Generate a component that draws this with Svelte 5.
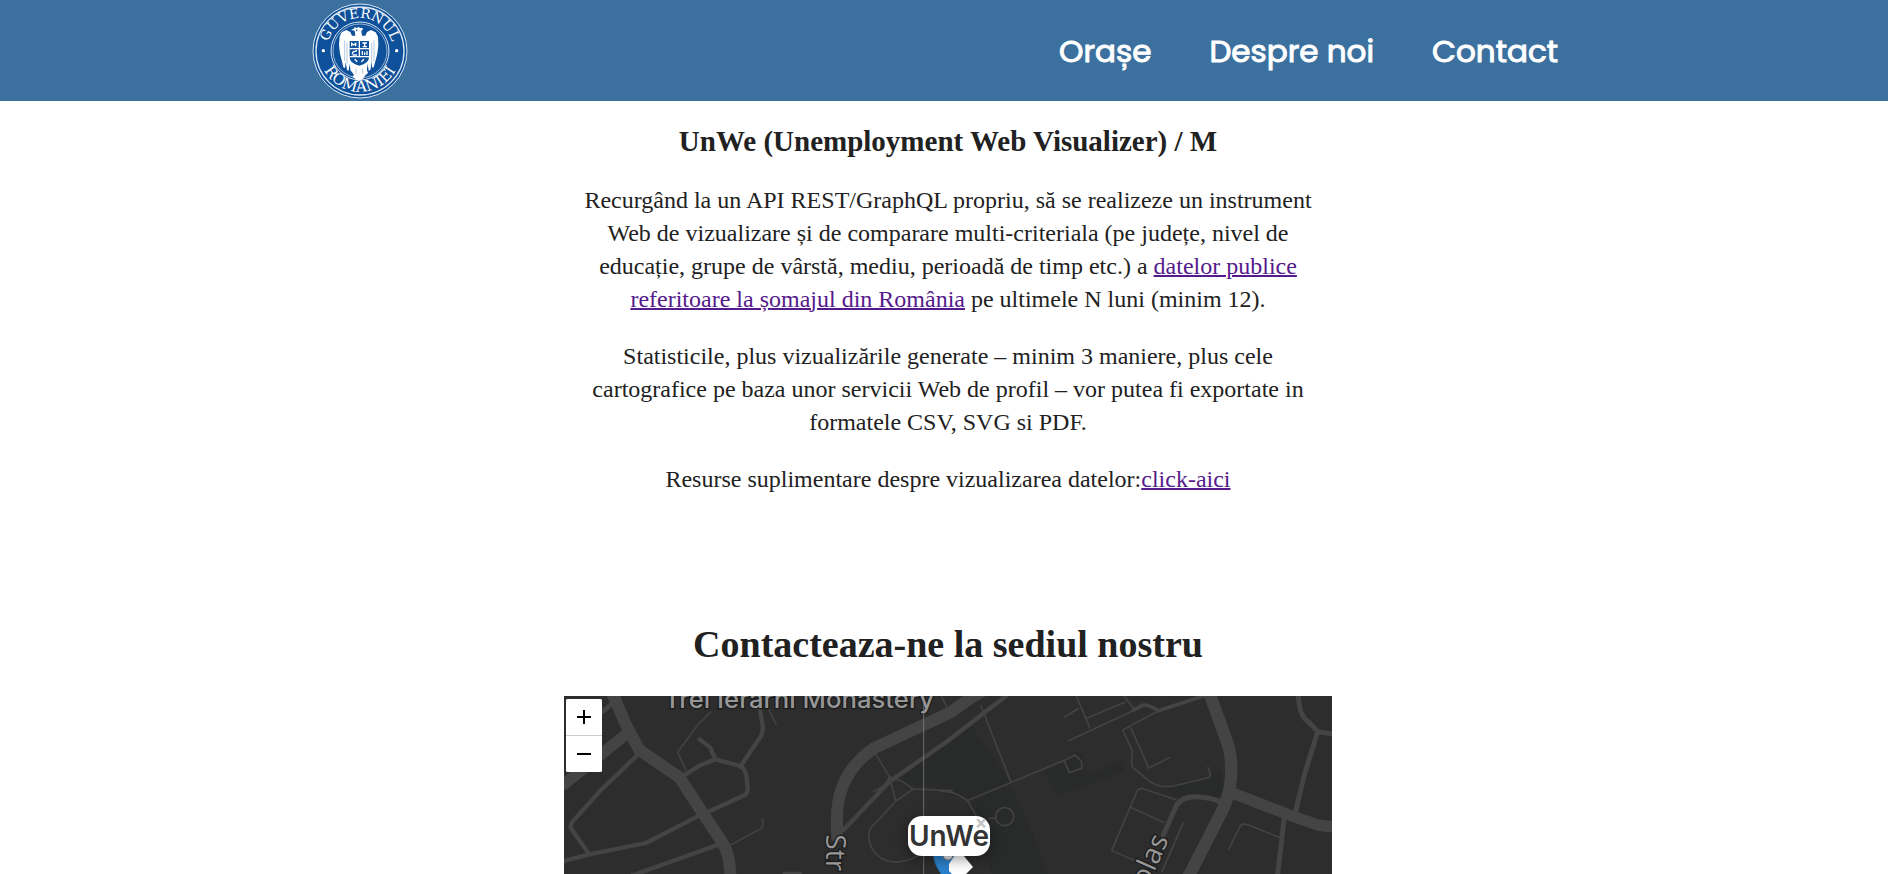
<script>
  const nav = ['Orașe', 'Despre noi', 'Contact'];
</script>

<div class="page">
  <header>
    <div class="bar">
      <a class="logo" href="#acasa" aria-label="Guvernul României">
        <svg viewBox="0 0 288 288" width="96" height="96">
          <defs>
            <path id="arc-top" d="M45 144A99 99 0 0 1 243 144" />
            <path id="arc-bottom" d="M22 144A122 122 0 0 0 266 144" />
          </defs>
          <circle cx="144" cy="144" r="141" fill="#0e509a" stroke="#dce8f3" stroke-width="3" />
          <circle cx="144" cy="144" r="132" fill="none" stroke="#dce8f3" stroke-width="4" />
          <circle cx="144" cy="144" r="87" fill="none" stroke="#dce8f3" stroke-width="3" />
          <circle cx="144" cy="144" r="81" fill="none" stroke="#dce8f3" stroke-width="2" />
          <circle cx="34" cy="143" r="5" fill="#fff" />
          <circle cx="254" cy="143" r="5" fill="#fff" />
          <text class="seal"><textPath href="#arc-top" startOffset="50%" text-anchor="middle">GUVERNUL</textPath></text>
          <text class="seal lower"><textPath href="#arc-bottom" startOffset="50%" text-anchor="middle">ROMÂNIEI</textPath></text>
          <g fill="#fff">
            <path d="M129 72l6 4 4-5 5 4 6-1 3 5-5 5 2 14h10l5-11 12-6 14 7 7 13 1 25-3 26-5 20-6 21-4 2-2-18-4 24-5 2-3-21-3 22-6 4-5 9 5 4-10 9-8 4-8-4-11-10 6-4-5-8-6-4-3-22-3 21-5-2-4-24-2 18-5-2-5-21-5-20-3-26 2-25 6-13 14-7 12 6 5 11h10l-2-15-11-2 8-4z" />
            <path d="M128 188l-7 22 17 15 6 5 7-5 17-15-8-22z" />
          </g>
          <g fill="#0e509a">
            <path d="M113 114h58v48q0 20-29 26-29-6-29-26z" />
            <circle cx="134" cy="82" r="2.500" />
          </g>
          <g fill="none" stroke="#fff" stroke-width="4">
            <path d="M113 137h58M142 114v48M113 161h58" />
            <path d="M119 130v-9l6 5 6-5v9M151 120h14M158 118v14M152 131h13" />
            <path d="M121 154q0-10 9-9l5-3M122 156h13M151 144v12M158 148v8M165 144v12M128 169l8 7M156 169l-8 7" />
          </g>
          <path d="M98 112v62M105 120v62M186 112v62M179 120v62M132 196v16M152 196v16" stroke="#0e509a" stroke-width="1.500" opacity=".6" />
        </svg>
      </a>
      <nav>
        {#each nav as item}
          <a href="#sectiune">{item}</a>
        {/each}
      </nav>
    </div>
  </header>

  <main>
    <section class="about">
      <h2>UnWe (Unemployment Web Visualizer) / M</h2>
      <p>
        Recurgând la un API REST/GraphQL propriu, să se realizeze un instrument Web de vizualizare și de comparare
        multi-criteriala (pe județe, nivel de educație, grupe de vârstă, mediu, perioadă de timp etc.) a
        <a href="#date">datelor publice referitoare la șomajul din România</a> pe ultimele N luni (minim 12).
      </p>
      <p>
        Statisticile, plus vizualizările generate – minim 3 maniere, plus cele cartografice pe baza unor servicii Web
        de profil – vor putea fi exportate in formatele CSV, SVG si PDF.
      </p>
      <p>Resurse suplimentare despre vizualizarea datelor:<a href="#resurse">click-aici</a></p>
    </section>

    <h1>Contacteaza-ne la sediul nostru</h1>

    <div class="map">
      <svg class="tiles" viewBox="0 0 2304 534" preserveAspectRatio="xMidYMin slice" aria-hidden="true">
        <rect width="2304" height="1200" fill="#2d2d2d" />
        <g transform="translate(1128 -18)">
          <g fill="#292b2a">
            <path d="M0 170L95 110 125 150 180 230 212 275 80 332 0 305-20 290-130 280 0 170z" />
            <path d="M80 335l132-50 30 60 90 220H160z" />
            <path d="M315 245l60-30 20-30 35 5-5 50 40 5 85-35 5 30-110 45-100 30z" />
            <path d="M670 292l140-35 30-20 10 60-20 25-80-10-40 10z" />
          </g>
        </g>
        <g transform="translate(-24 -18)" class="roads">
          <path d="M24 283L220 125M20 280l-30 20" stroke-width="34" />
          <path d="M140 65L180 30" stroke-width="14" />
          <path d="M165 0l45 105 40 75 120 82 60 92 65 97q28 40 28 110" stroke-width="36" />
          <path d="M250 190L135 300 52 392q-12 14-5 26l53 75M10 517l90-24 170-34 155-80M230 556l265-95" stroke-width="13" />
          <path d="M455 366l110-50q10-5 10-20l-4-40q-4-20-18-28l-75-20-50 20-52 34M478 208l-15-35-32-25M553 230l62-92q6-12 5-30l-10-60" stroke-width="13" />
          <path d="M843 440v-60q2-130 110-205l230-108L1250 20 1340-30" stroke-width="36" />
          <path d="M862 420L1000 275 1172 155 1360 10" stroke-width="13" />
        </g>
        <g transform="translate(-24 -18)" class="paths">
          <path d="M465 65l-40 40-60 82 26 56M625 30l36 75M500 478l115-62q12-10 3-30M958 190l42 70 20 75M1070 298l-50 35-75 80q-15 25 3 63 30 48 90 38 50-8 80-50M1000 260l40 15 30 22 120 5M870 410l130-140M1000 260q-8 30-50 45" />
          <path d="M680 550h58" stroke-width="10" />
        </g>
        <g transform="translate(1128 -18)" class="roads">
          <path d="M805 0l52 145q25 60 13 145-10 50-30 85L735 580" stroke-width="37" />
          <path d="M870 306l170 66 90 32q25 6 70 6" stroke-width="34" />
          <path d="M1075 10q2 70 30 85l28 30 70 10M1133 125l-40 130-27 112M1033 380l-22 190" stroke-width="15" />
          <path d="M670 435l40-90q20-28 70-24 40 4 60 14" stroke-width="15" />
          <path d="M580 60l30-15q20 0 45 17L800 15" stroke-width="11" />
        </g>
        <g transform="translate(1128 -18)" class="paths">
          <path d="M0 305q40-5 82 27l293-122 30-15 20 20v20l-37 13-15-35M122 45l90 230M82 332l28 48M408 15l42 100M372 82l45-27M436 86l120-50M550 15l35 45M385 152l195-90M655 62L548 120l28 60v50l45 38q32 28 80 20l100-24q12-3 10-12l-8-22M572 112l54 122 64-32M710 330L610 296q-15-5-22 15L515 482l75 32M568 350l106 48M730 398l-65 150M865 480l35-70q5-12 25-5l95 38M145 385h22M5 20l15 30" />
          <circle cx="194" cy="380" r="27" />
        </g>
        <g class="labels">
          <text x="300" y="37" class="big">Trei Ierarhi Monastery</text>
          <text transform="translate(786 415) rotate(90)" class="street">Str</text>
          <text transform="translate(1815 430) rotate(-66)" text-anchor="end" class="street">olas</text>
        </g>
        <path d="M1079 0V1200" stroke="#8c8c8c" stroke-width="2" />
      </svg>
      <div class="zoom">
        <button aria-label="Mărește"><svg viewBox="0 0 16 16" width="16" height="16"><path d="M1 8h14M8 1v14" /></svg></button>
        <button aria-label="Micșorează"><svg viewBox="0 0 16 16" width="16" height="16"><path d="M1 8h14" /></svg></button>
      </div>
      <svg class="marker" viewBox="0 0 42 40" width="42" height="40" aria-hidden="true">
        <path d="M0-4q1 12 7 20l8 20 7-18V-4z" fill="#2a81cb" stroke="#1f6aa8" />
        <circle cx="15" cy="-1" r="5" fill="#e4e4e4" stroke="#777" />
        <path d="M16 8l6-9h8l10 12-7 7q-7 3-13 1l-4-4z" fill="#fff" />
      </svg>
      <div class="popup">UnWe<button aria-label="Închide">×</button></div>
    </div>
  </main>
</div>

<style>
  :global(body) { margin: 0; background: #fff; }
  .page { display: flex; flex-direction: column; height: 100vh; overflow: hidden; color: #212121; font-family: "Liberation Serif", serif; }
  header { background: #3c719f; }
  .bar { display: flex; justify-content: space-between; align-items: center; max-width: 1264px; height: 101px; margin: 0 auto; padding-right: 18px; box-sizing: border-box; }
  .logo { display: flex; }
  .seal { font: 41px "DejaVu Serif", serif; fill: #fff; }
  .lower { font-size: 46px; }
  nav { display: flex; gap: 58px; }
  nav a { color: #fff; font: 400 31px/48px Poppins, Inter, sans-serif; text-decoration: none; -webkit-text-stroke: 1px #fff; }
  main { display: flex; flex: 1; flex-direction: column; width: 100%; max-width: 768px; min-height: 0; margin: 0 auto; padding-left: 8px; text-align: center; }
  .about { padding: 0 16px; }
  h2 { margin: 20px 0 23px; font-size: 29px; line-height: 40px; }
  p { margin: 0 0 24px; font-size: 24px; line-height: 33px; }
  p a { color: #551a8b; text-decoration-thickness: 2px; }
  h1 { margin: 96px 0 24px; font-size: 38px; line-height: 56px; }
  .map { position: relative; flex: 1; min-height: 160px; overflow: hidden; background: #2d2d2d; }
  .tiles { position: absolute; inset: 0; width: 100%; height: 100%; }
  .roads { fill: none; stroke: #444; stroke-linejoin: round; stroke-linecap: round; }
  .paths { fill: none; stroke: #424242; stroke-width: 5; }
  .labels { font-family: "Open Sans", sans-serif; fill: #979797; stroke: #1c1c1c; stroke-width: 8; paint-order: stroke; }
  .big { font-family: Inter, sans-serif; font-size: 77px; font-weight: 500; }
  .street { font-size: 84px; font-weight: 500; }
  .zoom { position: absolute; top: 3px; left: 2px; display: flex; flex-direction: column; width: 36px; overflow: hidden; background: #fff; border-radius: 2px; }
  .zoom button { display: flex; align-items: center; justify-content: center; height: 36px; padding: 0; background: #fff; border: 0; }
  .zoom button + button { height: 37px; border-top: 1px solid #ccc; }
  .zoom path { stroke: #000; stroke-width: 2; }
  .popup { position: absolute; top: 120px; left: 344px; padding: 0 1px; border-radius: 14px; background: #fff; color: #333; font: 600 28px/40px Inter, sans-serif; box-shadow: 0 3px 14px rgba(0, 0, 0, .4); }
  .popup button { position: absolute; top: 0; right: 0; width: 18px; height: 14px; padding: 0; border: 0; background: none; color: #c3c3c3; font: 700 20px/14px Roboto, sans-serif; }
  .marker { position: absolute; top: 160px; left: 369px; }
</style>
